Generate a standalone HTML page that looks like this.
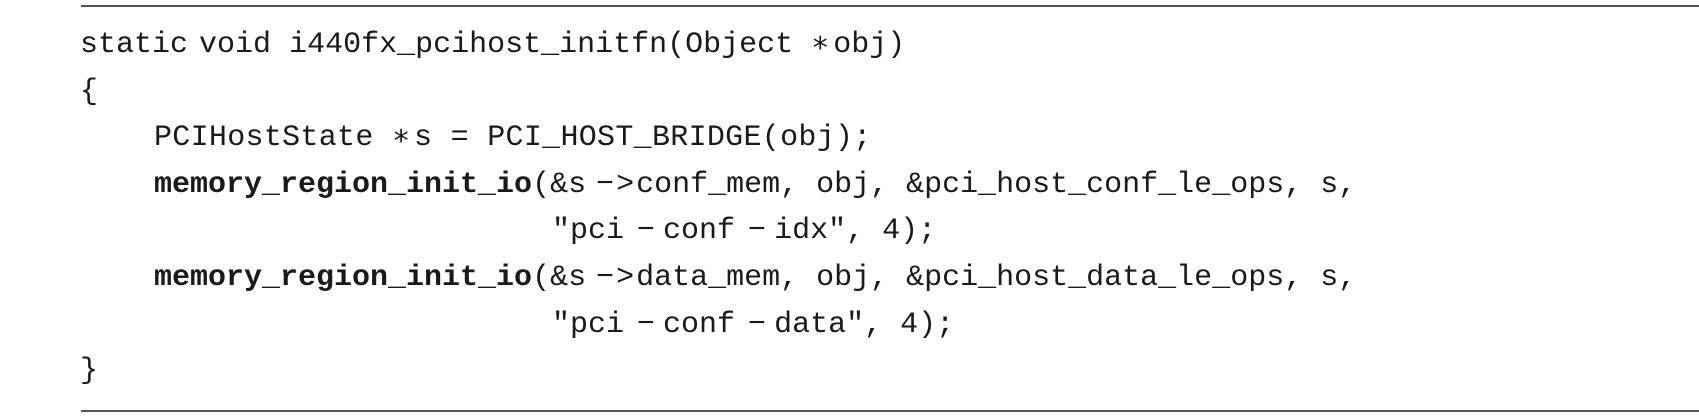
<!DOCTYPE html>
<html><head><meta charset="utf-8"><style>
html,body{margin:0;padding:0;background:#fff;}
body{width:1699px;height:417px;position:relative;overflow:hidden;}
.rule{position:absolute;left:81px;right:0;height:2px;background:#555;}
.l{position:absolute;white-space:pre;font-family:"Liberation Mono",monospace;font-size:30px;letter-spacing:0;color:#1a1a1a;line-height:30px;}
b{font-weight:bold;}
.n{letter-spacing:-7px}
.k{letter-spacing:-5px}
.m{letter-spacing:-8px}
</style></head><body>
<div class="rule" style="top:5px"></div>
<div class="l" style="left:80px;top:30px">static<span class="n"> </span>void i440fx_pcihost_initfn(Object <span class="n">∗ </span>obj)</div>
<div class="l" style="left:80px;top:77px">{</div>
<div class="l" style="left:154px;top:123px;letter-spacing:0.3px">PCIHostState <span class="n">∗ </span>s = PCI_HOST_BRIDGE(obj);</div>
<div class="l" style="left:154px;top:170px"><b>memory_region_init_io</b>(&amp;s<span class="m"> − &gt; </span>conf_mem, obj, &amp;pci_host_conf_le_ops, s,</div>
<div class="l" style="left:552px;top:216px">"pci<span class="k"> − </span>conf<span class="k"> − </span>idx", 4);</div>
<div class="l" style="left:154px;top:263px"><b>memory_region_init_io</b>(&amp;s<span class="m"> − &gt; </span>data_mem, obj, &amp;pci_host_data_le_ops, s,</div>
<div class="l" style="left:552px;top:310px">"pci<span class="k"> − </span>conf<span class="k"> − </span>data", 4);</div>
<div class="l" style="left:80px;top:356px">}</div>
<div class="rule" style="top:410px"></div>
</body></html>
